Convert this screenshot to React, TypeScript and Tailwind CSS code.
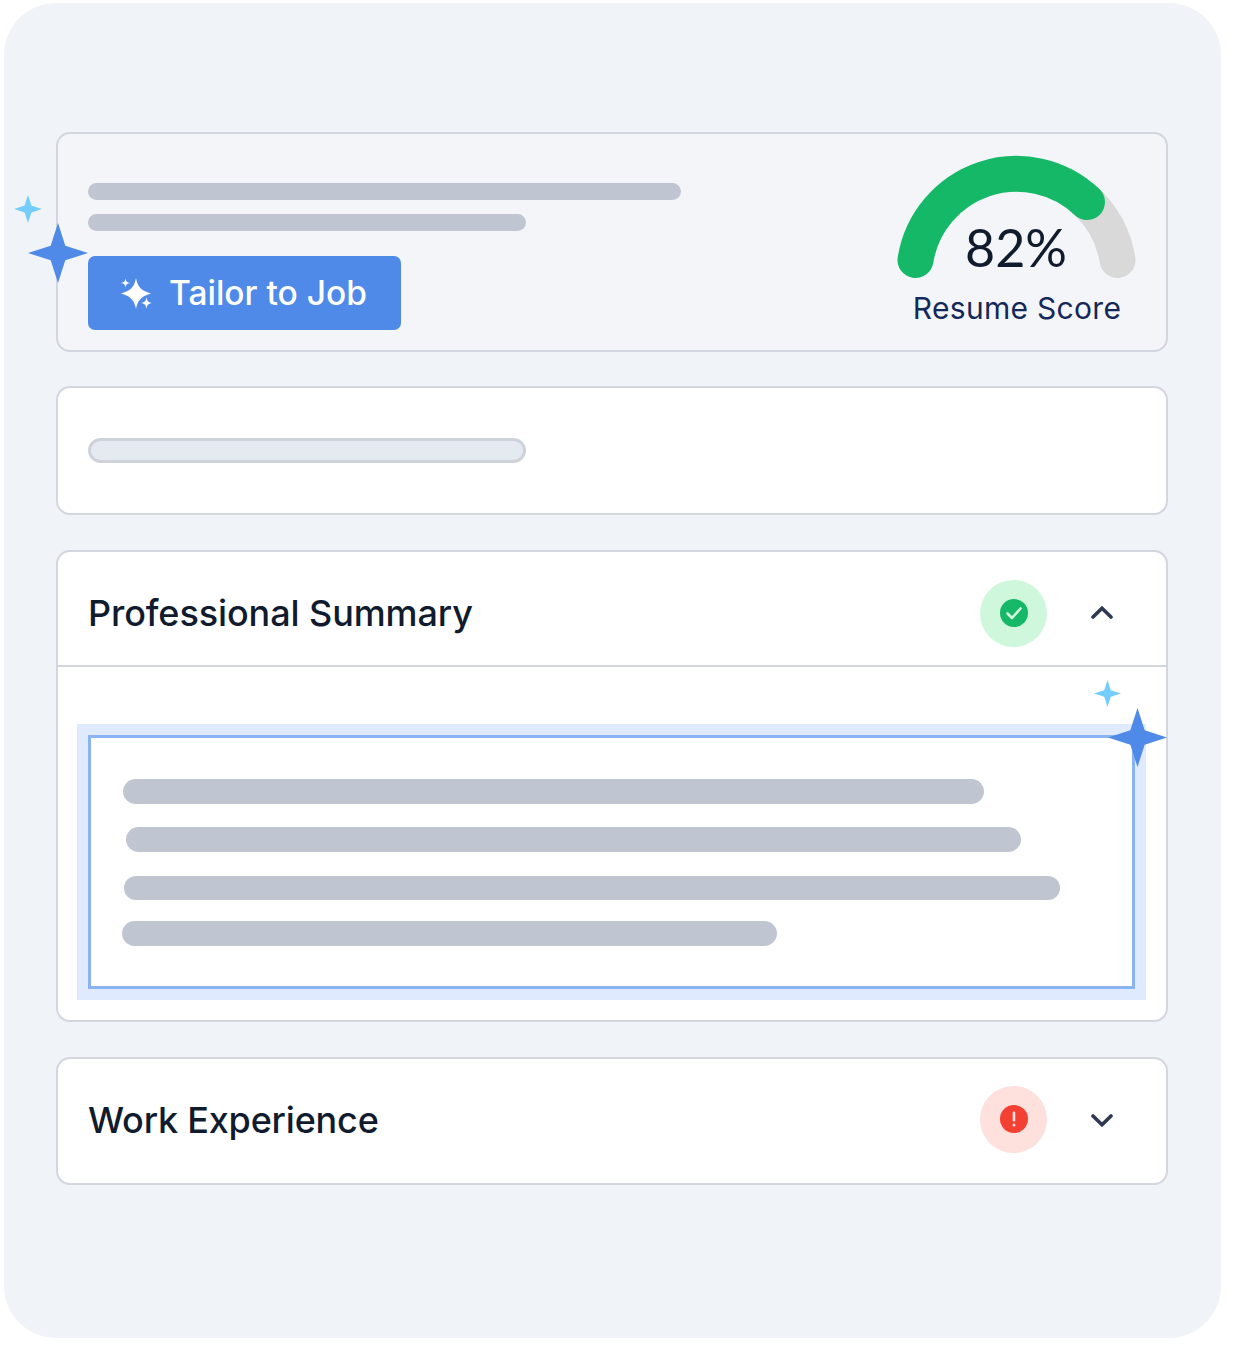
const Star = ({ className }: { className: string }) => (
  <svg viewBox="0 0 60 60" className={className} fill="currentColor">
    <path d="M30 0 L37.300 22.700 L60 30 L37.300 37.300 L30 60 L22.700 37.300 L0 30 L22.700 22.700 Z" />
  </svg>
);

const Sparkles = () => (
  <svg viewBox="0 0 32 32" className="w-8 h-8 shrink-0" fill="#fff">
    <path d="M16 1 C17.500 9 20.500 13.500 31 16.500 C20.500 19.500 17.500 24 16 32 C14.500 24 11.500 19.500 1 16.500 C11.500 13.500 14.500 9 16 1 Z" />
    <path d="M5.500 1.500 C6 4.500 7 5.500 10 6 C7 6.500 6 7.500 5.500 10.500 C5 7.500 4 6.500 1 6 C4 5.500 5 4.500 5.500 1.500 Z" />
    <path d="M26.500 20 C27 24 28 25.200 32 26 C28 26.800 27 28 26.500 32 C26 28 25 26.800 21 26 C25 25.200 26 24 26.500 20 Z" />
  </svg>
);

const Chevron = ({ up }: { up?: boolean }) => (
  <svg viewBox="0 0 24 14" className="w-6 h-3.5" fill="none" stroke="#2f3a52" strokeWidth="3.600" strokeLinecap="round" strokeLinejoin="miter">
    <path d={up ? "M3 12 L12 3.200 L21 12" : "M3 2 L12 10.800 L21 2"} />
  </svg>
);

const Row = ({ title, children, up }: { title: string; children: React.ReactNode; up?: boolean }) => (
  <div className="flex items-center h-[124px] pl-[30px] pr-[9px]">
    <span className={`flex-1 text-[36px] leading-none text-[#111b2e] font-[450] ${up ? "tracking-[-0.1px]" : "tracking-[-0.2px] mt-[2px]"}`}>{title}</span>
    {children}
    <div className={`w-[110px] flex justify-center ${up ? "-mt-[2px]" : "mt-[4px]"}`}>
      <Chevron up={up} />
    </div>
  </div>
);

const Bar = ({ className }: { className: string }) => <div className={`h-[25px] rounded-full bg-[#bfc6d2] ${className}`} />;

export default function App() {
  return (
    <div className="w-[1234px] h-[1346px] bg-white pt-[3px] pl-[4px] font-['Inter',sans-serif]">
      <div className="w-[1217px] h-[1335px] rounded-[52px] bg-[#f0f3f8] pt-[129px] pl-[52px] pr-[53px] flex flex-col">
        {/* Score card */}
        <div className="relative h-[220px] rounded-[14px] border-2 border-[#d2d6df] bg-[#f3f5f9] pl-[30px] pt-[49px]">
          <div className="h-[17px] w-[593px] rounded-full bg-[#bfc6d2]" />
          <div className="h-[17px] w-[438px] rounded-full bg-[#bfc6d2] mt-[14px]" />
          <div className="mt-[25px] w-[313px] h-[74px] rounded-[7px] bg-[#4f8ae8] flex items-center pl-[32px] gap-[17px]">
            <Sparkles />
            <span className="text-[33.500px] leading-none text-white font-medium mt-[2px]">Tailor to Job</span>
          </div>
          <Star className="absolute left-[-30px] top-[89px] w-[60px] h-[60px] text-[#4f8ae8]" />
          <Star className="absolute left-[-44px] top-[61px] w-[28px] h-[28px] text-[#74cdfd]" />
          <div className="absolute right-[29px] top-[20px] w-[240px] flex flex-col items-center">
            <div className="relative w-[240px] h-[124px]">
              <svg viewBox="0 0 240 124" className="absolute inset-0 w-full h-full" fill="none" strokeWidth="36" strokeLinecap="round">
                <path d="M220.500 106 A102.300 102.300 0 0 0 190 48" stroke="#d9d9d9" />
                <path d="M18.500 106 A102.300 102.300 0 0 1 190 48" stroke="#14b866" />
              </svg>
              <span className="absolute inset-x-0 top-[67px] text-center text-[52px] leading-none text-[#111b2e] font-['Lato',sans-serif] pr-[2px]">82%</span>
            </div>
            <span className="mt-[15px] text-[30px] leading-none text-[#14285a] tracking-[0.3px] whitespace-nowrap">Resume Score</span>
          </div>
        </div>

        {/* Input card */}
        <div className="mt-[34px] h-[129px] rounded-[14px] border-2 border-[#d2d6df] bg-white pl-[30px] pt-[50px]">
          <div className="h-[25px] w-[438px] rounded-full bg-[#e5e9f0] border-[3px] border-[#cdd2db]" />
        </div>

        {/* Summary card */}
        <div className="relative mt-[35px] h-[472px] rounded-[14px] border-2 border-[#d2d6df] bg-white">
          <div className="border-b-2 border-[#d2d6df] h-[115px] flex items-start">
            <div className="w-full -mt-[1px]">
              <Row title="Professional Summary" up>
                <div className="w-[67px] h-[67px] rounded-full bg-[#cff7dc] flex items-center justify-center">
                  <svg viewBox="0 0 28 28" className="w-7 h-7">
                    <circle cx="14" cy="14" r="14" fill="#14b866" />
                    <path d="M7.500 14.500 L12 19 L20.500 9.500" fill="none" stroke="#d3f8df" strokeWidth="2.600" strokeLinecap="round" strokeLinejoin="round" />
                  </svg>
                </div>
              </Row>
            </div>
          </div>
          <div className="ml-[30px] mt-[68px] w-[1047px] h-[254px] border-[3px] border-[#8ab3f3] bg-white shadow-[0_0_0_11px_#e0eafe] flex flex-col">
            <Bar className="mt-[41px] ml-[32px] w-[861px]" />
            <Bar className="mt-[23px] ml-[35px] w-[895px]" />
            <Bar className="mt-[24px] ml-[33px] w-[936px] !h-[24px]" />
            <Bar className="mt-[21px] ml-[31px] w-[655px]" />
          </div>
          <Star className="absolute left-[1050px] top-[156px] w-[59px] h-[59px] text-[#4f8ae8]" />
          <Star className="absolute left-[1036px] top-[128px] w-[27px] h-[27px] text-[#74cdfd]" />
        </div>

        {/* Work card */}
        <div className="mt-[35px] h-[128px] rounded-[14px] border-2 border-[#d2d6df] bg-white">
          <div className="-mt-[2px]">
            <Row title="Work Experience">
              <div className="w-[67px] h-[67px] rounded-full bg-[#fee0dd] flex items-center justify-center">
                <svg viewBox="0 0 28 28" className="w-7 h-7">
                  <circle cx="14" cy="14" r="14" fill="#f43f33" />
                  <rect x="12.700" y="6.500" width="2.600" height="10" rx="1.300" fill="#fde3e0" />
                  <circle cx="14" cy="20" r="1.500" fill="#fde3e0" />
                </svg>
              </div>
            </Row>
          </div>
        </div>
      </div>
    </div>
  );
}
